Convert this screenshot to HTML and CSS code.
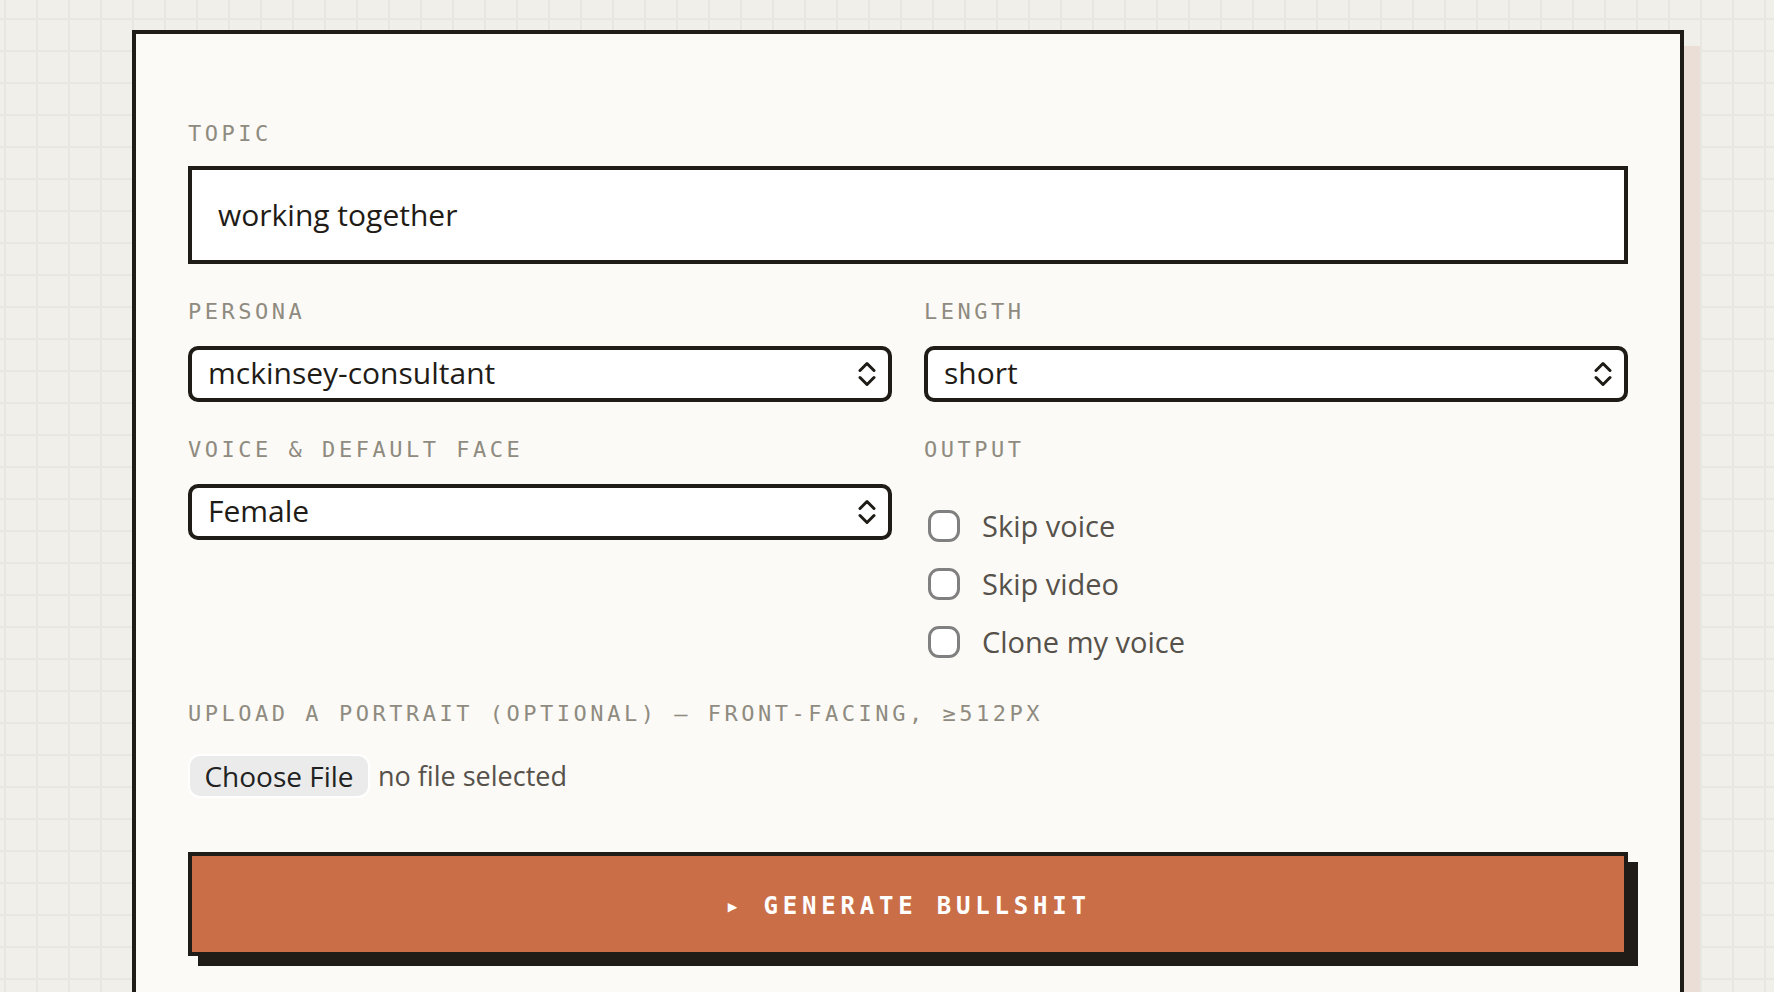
FILE: index.html
```html
<!DOCTYPE html>
<html lang="en">
<head>
<meta charset="utf-8">
<meta name="viewport" content="width=device-width, initial-scale=1">
<title>Generator</title>
<link rel="stylesheet" href="styles.css">
</head>
<body>
<main class="page">
  <form class="card">
    <div class="field">
      <label class="label" for="topic">TOPIC</label>
      <input class="text-input" id="topic" type="text" value="working together">
    </div>

    <div class="grid">
      <div class="field">
        <label class="label" for="persona">PERSONA</label>
        <div class="select">
          <select class="select-control" id="persona"><option>mckinsey-consultant</option></select>
          <svg class="chevrons" viewBox="0 0 18 26" aria-hidden="true"><path d="M2 9.5 9 2.5l7 7M2 16.5l7 7 7-7"/></svg>
        </div>
      </div>
      <div class="field">
        <label class="label" for="length">LENGTH</label>
        <div class="select">
          <select class="select-control" id="length"><option>short</option></select>
          <svg class="chevrons" viewBox="0 0 18 26" aria-hidden="true"><path d="M2 9.5 9 2.5l7 7M2 16.5l7 7 7-7"/></svg>
        </div>
      </div>
      <div class="field">
        <label class="label" for="voice">VOICE &amp; DEFAULT FACE</label>
        <div class="select">
          <select class="select-control" id="voice"><option>Female</option></select>
          <svg class="chevrons" viewBox="0 0 18 26" aria-hidden="true"><path d="M2 9.5 9 2.5l7 7M2 16.5l7 7 7-7"/></svg>
        </div>
      </div>
      <fieldset class="field">
        <legend class="label">OUTPUT</legend>
        <div class="checks">
          <label class="check"><input class="box" type="checkbox">Skip voice</label>
          <label class="check"><input class="box" type="checkbox">Skip video</label>
          <label class="check"><input class="box" type="checkbox">Clone my voice</label>
        </div>
      </fieldset>
    </div>

    <div class="field">
      <label class="label" for="portrait">UPLOAD A PORTRAIT (OPTIONAL) — FRONT-FACING, ≥512PX</label>
      <div class="file-row">
        <input class="file" id="portrait" type="file" accept="image/*">
        <span>no file selected</span>
      </div>
    </div>

    <button class="submit" type="button">▸ GENERATE BULLSHIT</button>
  </form>
</main>
</body>
</html>
```

FILE: styles.css
```css
:root {
  --ink: #1f1c17;
  --muted: #8f8b80;
  --soft: #56514a;
  --card: #fbfaf6;
  --paper: #f0efea;
  --line: #e8e7e2;
  --accent: #ca6e48;
  --sans: "Open Sans", "Noto Sans", sans-serif;
  --mono: "DejaVu Sans Mono", monospace;
}

* {
  box-sizing: border-box;
}

body {
  margin: 0;
  color: var(--ink);
  font-family: var(--sans);
  background-color: var(--paper);
  background-image:
    linear-gradient(var(--line) 2px, transparent 2px),
    linear-gradient(90deg, var(--line) 2px, transparent 2px);
  background-size: 32px 32px;
  background-position: 4px 18px;
}

.page {
  padding: 30px 90px 30px 132px;
}

.card {
  padding: 52px;
  border: 4px solid var(--ink);
  background: var(--card);
  box-shadow: 16px 16px 0 #ebded6;
}

.field {
  min-width: 0;
  margin: 34px 0 0;
  padding: 0;
  border: 0;
}

.label {
  display: block;
  margin-bottom: 18px;
  padding: 0;
  color: var(--muted);
  font-family: var(--mono);
  font-size: 22px;
  line-height: 28px;
  letter-spacing: 0.16em;
}

.text-input {
  display: block;
  width: 100%;
  height: 98px;
  padding: 0 26px 2px;
  border: 4px solid var(--ink);
  border-radius: 0;
  background: #fff;
  color: var(--ink);
  font: 30px var(--sans);
}

.grid {
  display: grid;
  grid-template-columns: 1fr 1fr;
  column-gap: 32px;
}

.select {
  display: grid;
  align-items: center;
  margin-top: 20px;
}

.select-control {
  grid-area: 1 / 1;
  width: 100%;
  height: 56px;
  padding: 0 48px 4px 16px;
  border: 4px solid var(--ink);
  border-radius: 10px;
  background: #fff;
  color: var(--ink);
  font: 30px var(--sans);
  appearance: none;
}

.chevrons {
  grid-area: 1 / 1;
  justify-self: end;
  width: 18px;
  height: 26px;
  margin-right: 16px;
  fill: none;
  stroke: var(--ink);
  stroke-width: 3;
  stroke-linecap: round;
  stroke-linejoin: round;
  pointer-events: none;
}

.checks {
  display: grid;
  gap: 16px;
  padding: 23px 0 3px;
}

.check {
  display: flex;
  align-items: center;
  gap: 22px;
  padding-left: 4px;
  color: var(--soft);
  font-size: 29px;
  line-height: 42px;
}

.box {
  width: 32px;
  height: 32px;
  margin: 0;
  border: 3px solid #808080;
  border-radius: 11px;
  background: #fff;
  appearance: none;
}

.box:checked {
  background: var(--accent);
}

.file-row {
  display: flex;
  align-items: center;
  gap: 8px;
  margin-top: 26px;
  color: var(--soft);
  font-size: 27px;
  line-height: 44px;
}

.file {
  width: 182px;
  height: 44px;
  overflow: hidden;
  color: transparent;
  font: 27px var(--sans);
}

.file::file-selector-button {
  width: 182px;
  height: 44px;
  margin: 0;
  padding: 0;
  border: 2px solid #fff;
  border-radius: 12px;
  background: #ebebeb;
  color: #222;
  font: 28px/40px var(--sans);
}

.submit {
  display: block;
  width: 100%;
  height: 104px;
  margin-top: 54px;
  padding: 4px 0 0;
  border: 4px solid var(--ink);
  border-radius: 0;
  background: var(--accent);
  box-shadow: 10px 10px 0 var(--ink);
  color: #fff;
  font: bold 24px var(--mono);
  letter-spacing: 0.2em;
}
```
